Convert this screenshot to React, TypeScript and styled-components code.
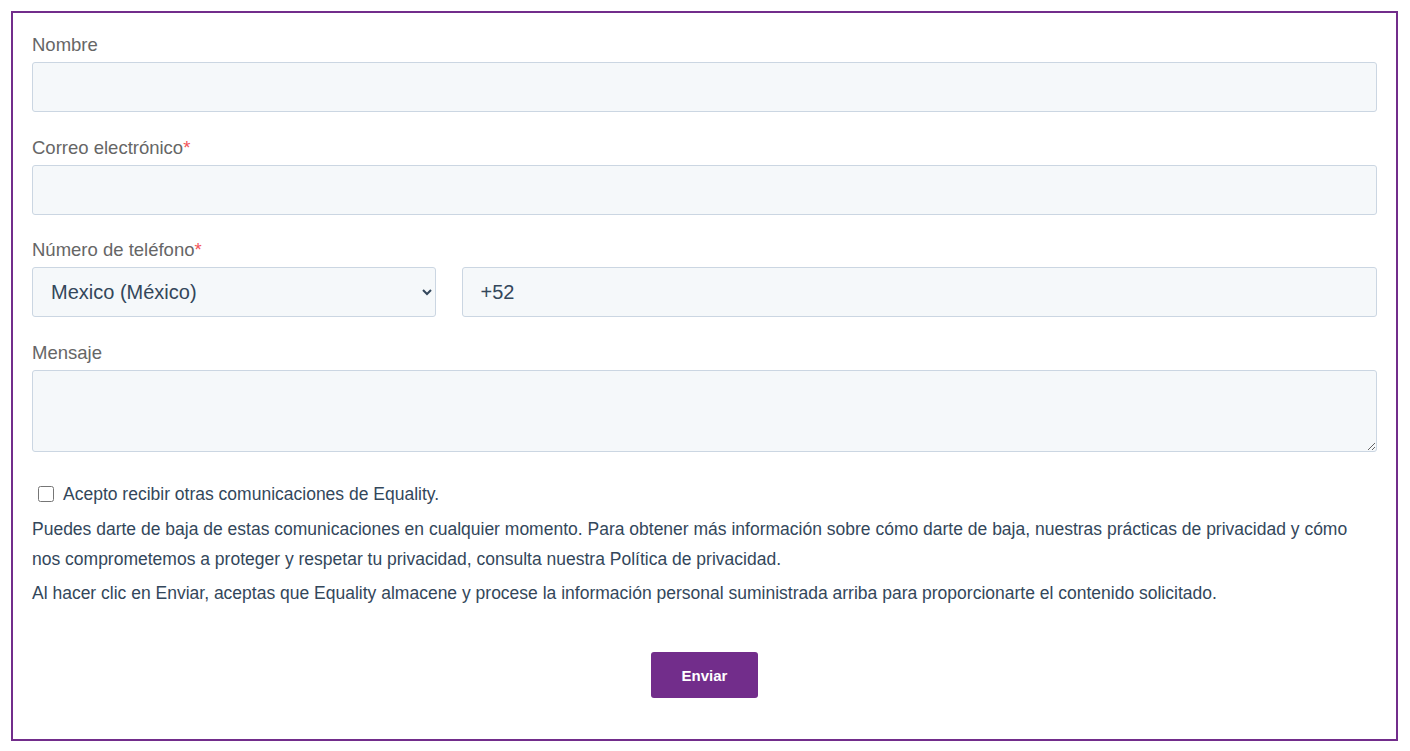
import { createGlobalStyle } from "styled-components";
import styled from "styled-components";

const GlobalStyle = createGlobalStyle`
  body {
    margin: 0;
    background: #ffffff;
    font-family: "Liberation Sans", Arial, sans-serif;
  }
  * {
    box-sizing: border-box;
  }
`;

export default function App() {
  return (
    <Page>
      <GlobalStyle />
      <Form onSubmit={(e) => e.preventDefault()}>
        <Field>
          <Label>Nombre</Label>
          <Input type="text" />
        </Field>
        <Field>
          <Label>
            Correo electrónico<Required>*</Required>
          </Label>
          <Input type="email" />
        </Field>
        <Field>
          <Label>
            Número de teléfono<Required>*</Required>
          </Label>
          <PhoneRow>
            <Select defaultValue="MX">
              <option value="MX">Mexico (México)</option>
            </Select>
            <Input type="tel" defaultValue="+52" />
          </PhoneRow>
        </Field>
        <Field>
          <Label>Mensaje</Label>
          <TextArea />
        </Field>
        <CheckRow>
          <Checkbox type="checkbox" />
          <span>Acepto recibir otras comunicaciones de Equality.</span>
        </CheckRow>
        <Legal>
          Puedes darte de baja de estas comunicaciones en cualquier momento. Para obtener más información sobre cómo darte
          de baja, nuestras prácticas de privacidad y cómo nos comprometemos a proteger y respetar tu privacidad, consulta
          nuestra Política de privacidad.
        </Legal>
        <Legal>
          Al hacer clic en Enviar, aceptas que Equality almacene y procese la información personal suministrada arriba para
          proporcionarte el contenido solicitado.
        </Legal>
        <Actions>
          <SubmitButton type="submit">Enviar</SubmitButton>
        </Actions>
      </Form>
    </Page>
  );
}

const Page = styled.div`
  padding: 11px 12px 10px 11px;
`;

const Form = styled.form`
  border: 2px solid #722d8b;
  padding: 20px 19px 41px 19px;
  display: flex;
  flex-direction: column;
`;

const Field = styled.div`
  display: flex;
  flex-direction: column;
  margin-bottom: 23.5px;
`;

const Label = styled.label`
  font-size: 18.5px;
  line-height: 24px;
  color: #666666;
  margin-bottom: 5px;
`;

const Required = styled.span`
  color: #f2545b;
`;

const fieldBase = `
  width: 100%;
  height: 50px;
  background: #f5f8fa;
  border: 1px solid #cbd6e2;
  border-radius: 3px;
  font-family: "Liberation Sans", Arial, sans-serif;
  font-size: 20px;
  color: #33475b;
  outline: none;
`;

const Input = styled.input`
  ${fieldBase}
  padding: 0 18px;
`;

const Select = styled.select`
  ${fieldBase}
  padding: 0 8px 0 14px;
`;

const TextArea = styled.textarea`
  ${fieldBase}
  height: 82px;
  padding: 10px 18px;
  resize: vertical;
`;

const PhoneRow = styled.div`
  display: grid;
  grid-template-columns: 30% 1fr;
  gap: 26px;
`;

const CheckRow = styled.label`
  display: flex;
  align-items: center;
  gap: 9px;
  font-size: 17.5px;
  line-height: 30px;
  color: #33475b;
  margin-top: 4px;
  margin-bottom: 5px;
  padding-left: 6px;
`;

const Checkbox = styled.input`
  width: 16px;
  height: 16px;
  margin: 0;
`;

const Legal = styled.p`
  margin: 0 0 4px 0;
  font-size: 17.5px;
  line-height: 30px;
  color: #33475b;
`;

const Actions = styled.div`
  display: flex;
  justify-content: center;
  margin-top: 40px;
`;

const SubmitButton = styled.button`
  width: 107px;
  height: 46px;
  background: #722d8b;
  border: none;
  border-radius: 3px;
  color: #ffffff;
  font-family: "Liberation Sans", Arial, sans-serif;
  font-weight: 700;
  font-size: 15px;
  cursor: pointer;
`;
